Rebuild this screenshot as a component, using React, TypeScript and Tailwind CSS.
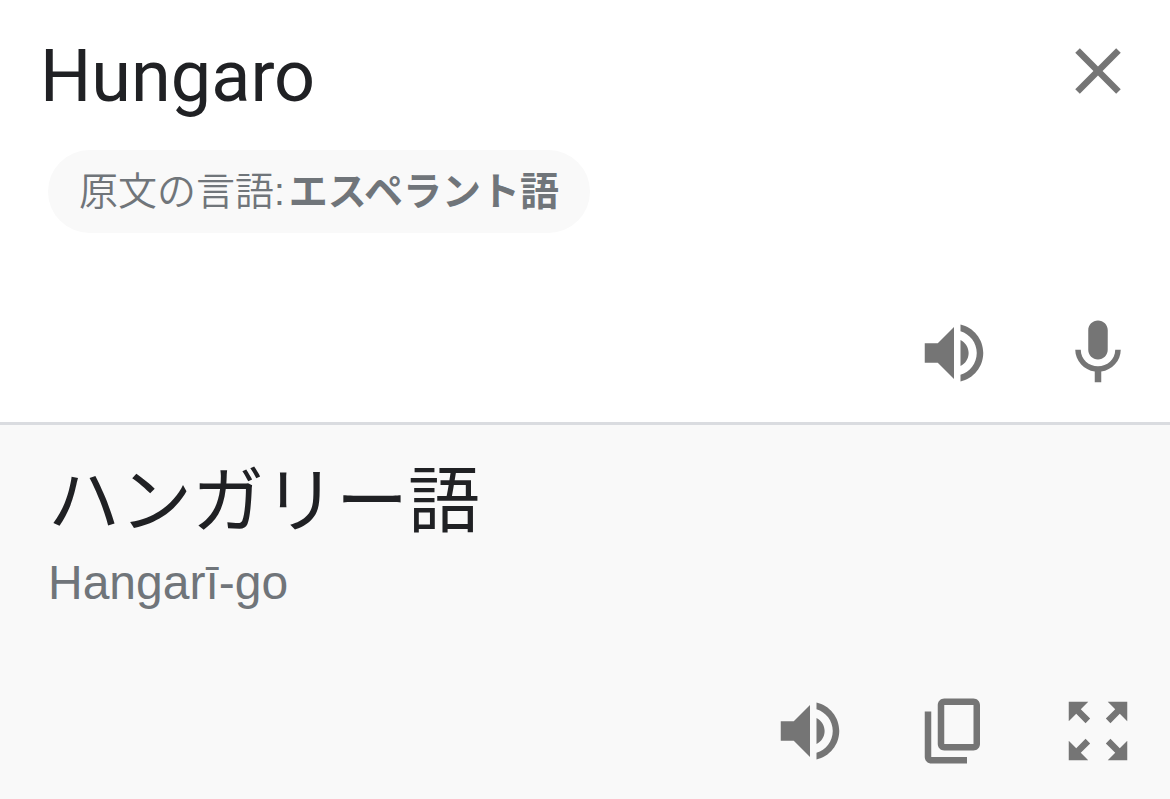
import { useState } from 'react';

const icons = {
  close:
    'M19 6.41L17.59 5 12 10.59 6.41 5 5 6.41 10.59 12 5 17.59 6.41 19 12 13.41 17.59 19 19 17.59 13.41 12z',
  volume:
    'M3 9v6h4l5 5V4L7 9H3zm11-1.03v8.05c1.48-.73 2.5-2.25 2.5-4.02 0-1.77-1.02-3.29-2.5-4.03zm0-4.74v2.06c2.89.86 5 3.54 5 6.71s-2.11 5.85-5 6.71v2.06c4.01-.91 7-4.49 7-8.77s-2.99-7.86-7-8.77z',
  mic:
    'M12 14c1.66 0 2.99-1.34 2.99-3L15 5c0-1.66-1.34-3-3-3S9 3.34 9 5v6c0 1.66 1.34 3 3 3zm5.3-3c0 3-2.54 5.1-5.3 5.1S6.7 14 6.7 11H5c0 3.41 2.72 6.23 6 6.72V21h2v-3.28c3.28-.48 6-3.3 6-6.72h-1.7z',
  copy:
    'M18 2H9c-1.1 0-2 .9-2 2v12c0 1.1.9 2 2 2h9c1.1 0 2-.9 2-2V4c0-1.1-.9-2-2-2zm0 14H9V4h9v12zM3 6v14c0 1.1.9 2 2 2h11v-2H5V6H3z',
  expand:
    'M15 3l2.3 2.3-2.89 2.87 1.42 1.42L18.7 6.7 21 9V3h-6zM3 9l2.3-2.3 2.87 2.89 1.42-1.42L6.7 5.3 9 3H3v6zm6 12l-2.3-2.3 2.89-2.87-1.42-1.42L5.3 17.3 3 15v6h6zm12-6l-2.3 2.3-2.87-2.89-1.42 1.42 2.89 2.87L15 21h6v-6z',
};

function IconButton({ icon, label }: { icon: keyof typeof icons; label: string }) {
  return (
    <button type="button" aria-label={label} className="shrink-0 text-[#757575]">
      <svg viewBox="0 0 24 24" fill="currentColor" aria-hidden="true" className="block size-[78px]">
        <path d={icons[icon]} />
      </svg>
    </button>
  );
}

export default function App() {
  const [text, setText] = useState('Hungaro');

  return (
    <main
      lang="ja"
      className="flex min-h-screen flex-col bg-white font-['Liberation_Sans','Noto_Sans_CJK_JP',sans-serif] text-[#202124]"
    >
      <section className="border-b-3 border-[#dadce0] pt-8 pr-[33px] pb-[30px] pl-12">
        <div className="-ml-2 flex items-start">
          <input
            type="text"
            aria-label="原文"
            value={text}
            onChange={(e) => setText(e.target.value)}
            className="h-[90px] min-w-0 flex-1 bg-transparent font-[Roboto,sans-serif] text-[72px] outline-none"
          />
          <IconButton icon="close" label="消去" />
        </div>
        <button
          type="button"
          className="mt-7 flex w-fit gap-1 rounded-full bg-[#f9f9f9] px-[31px] py-4 text-[39px] leading-[51px] text-[#70757a]"
        >
          <span className="font-[350]">原文の言語:</span>
          <span className="font-bold">エスペラント語</span>
        </button>
        <div className="mt-[81px] flex justify-end gap-[66px]">
          <IconButton icon="volume" label="原文を聞く" />
          <IconButton icon="mic" label="音声入力" />
        </div>
      </section>

      <section className="flex flex-1 flex-col bg-[#f9f9f9] pt-[34px] pr-[33px] pb-[29px] pl-12">
        <p className="text-[72px] leading-[84px]">ハンガリー語</p>
        <p className="mt-[10px] text-[48px] leading-[60px] text-[#70757a]">Hangarī-go</p>
        <div className="mt-auto flex justify-end gap-[66px]">
          <IconButton icon="volume" label="訳文を聞く" />
          <IconButton icon="copy" label="コピー" />
          <IconButton icon="expand" label="全画面表示" />
        </div>
      </section>
    </main>
  );
}
